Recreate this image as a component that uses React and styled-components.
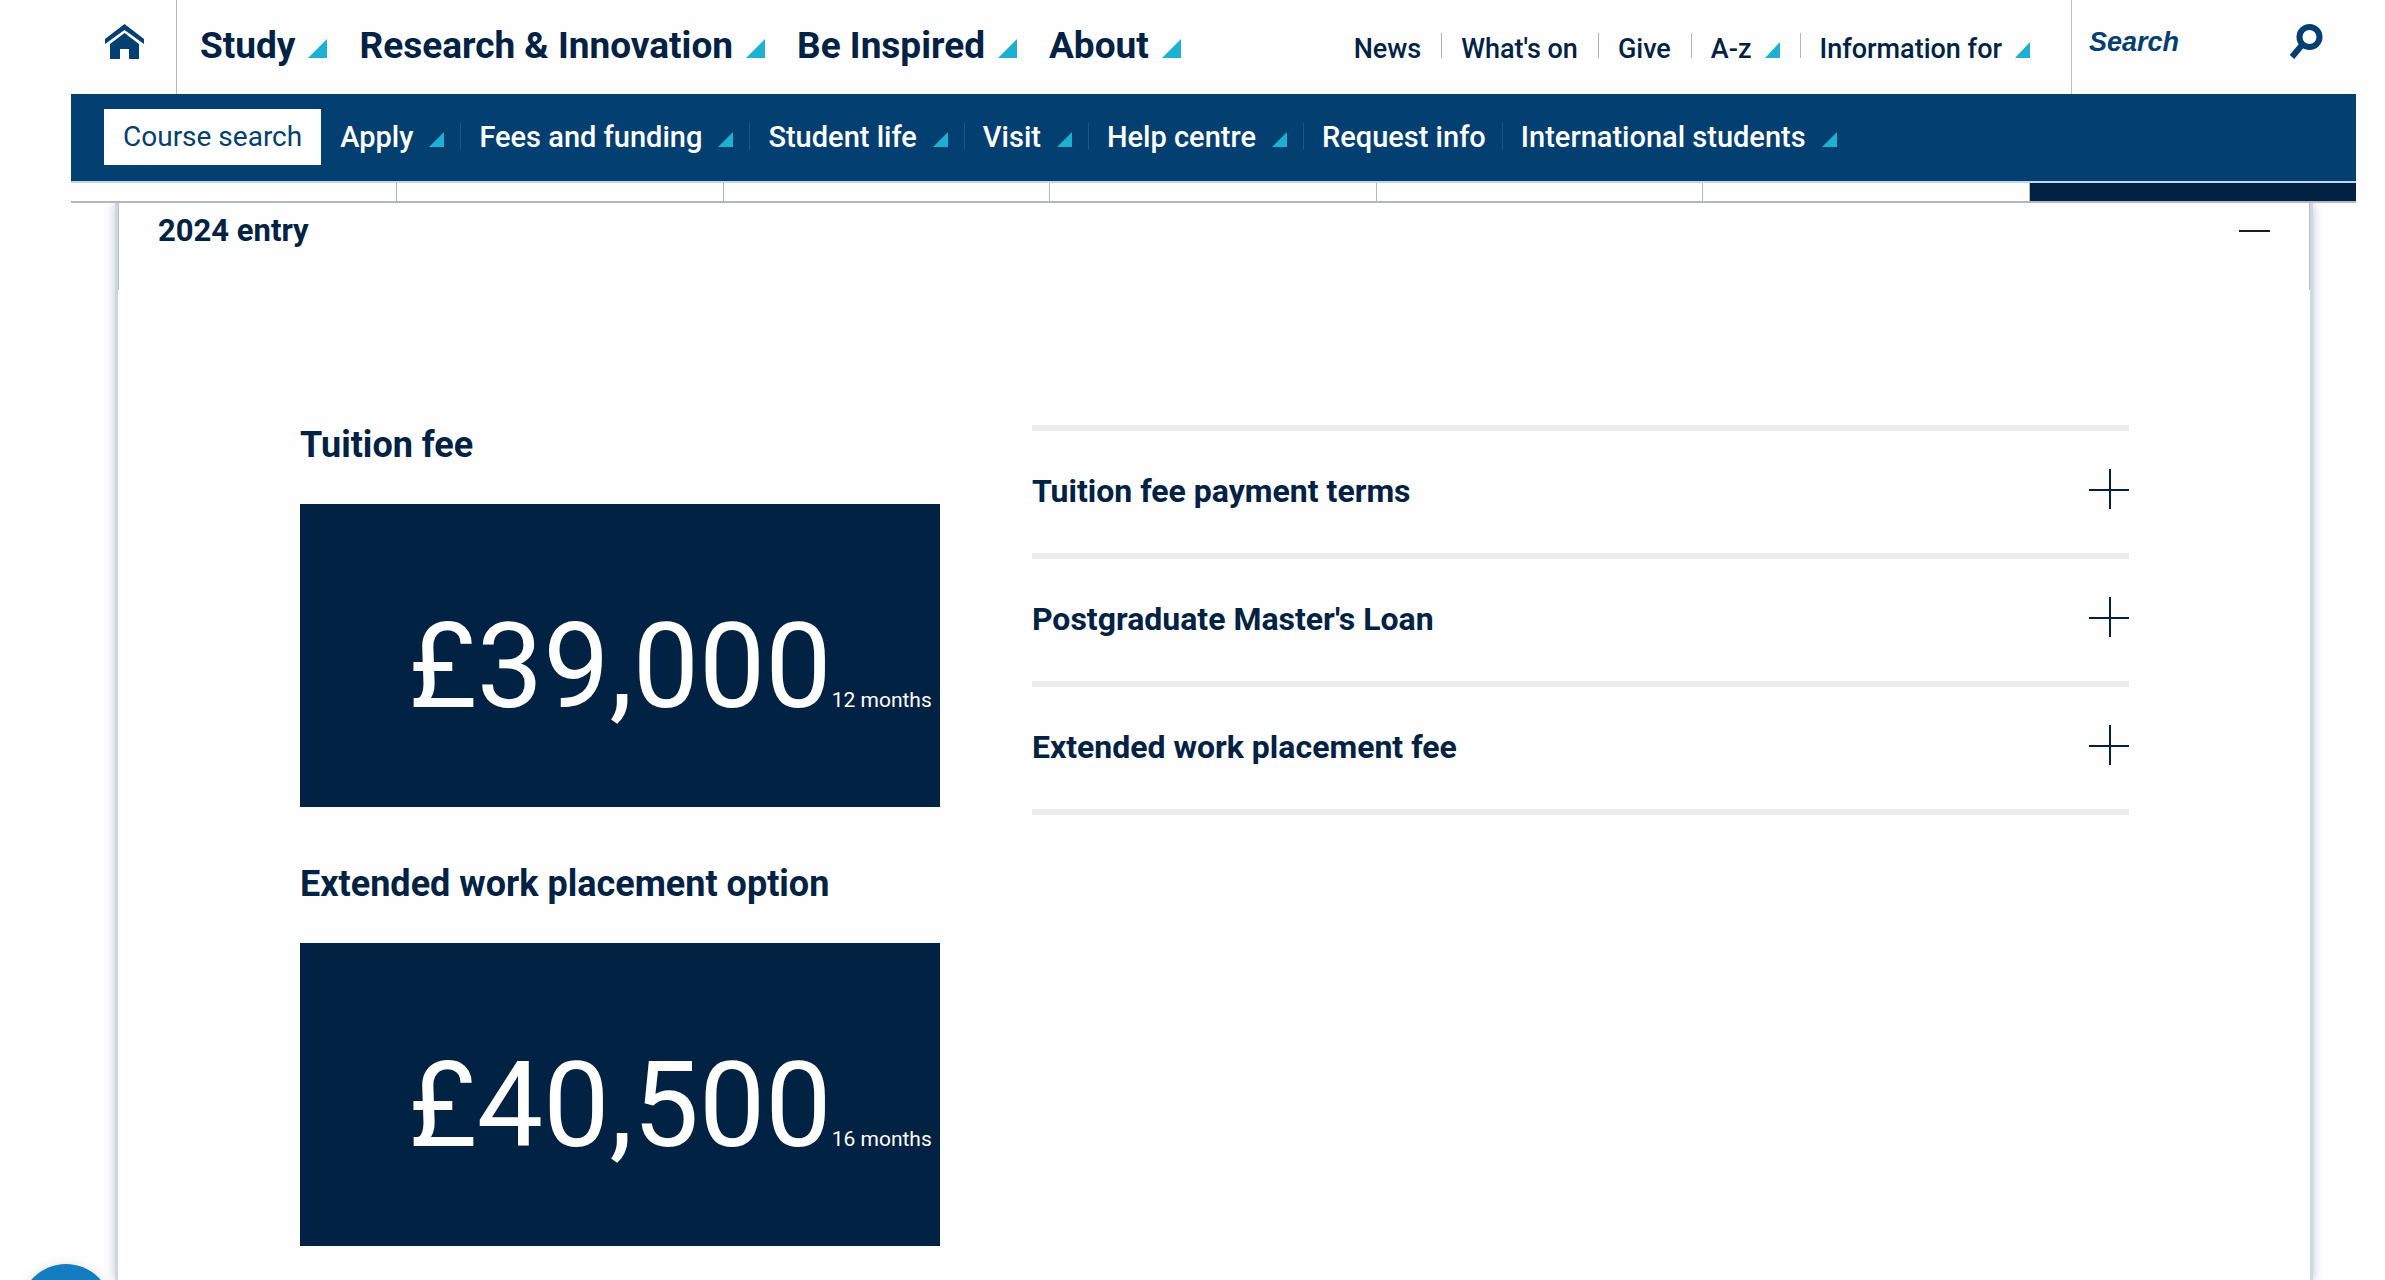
import React from "react";
import styled, { createGlobalStyle } from "styled-components";

const navy = "#022244";
const blue = "#033f70";
const cyan = "#1cb0d3";

const GlobalStyle = createGlobalStyle`
  *, *::before, *::after { box-sizing: border-box; }
  body {
    margin: 0;
    background: #fefefe;
    color: ${navy};
    font-family: Roboto, "Noto Sans", sans-serif;
  }
  ul, h2, p { margin: 0; padding: 0; }
  ul { list-style: none; }
  a { color: inherit; text-decoration: none; }
  button, input { font: inherit; color: inherit; border: 0; background: none; padding: 0; border-radius: 0; }
  button { cursor: pointer; text-align: left; }
`;

const Page = styled.div`
  display: flex;
  flex-direction: column;
  min-height: 100vh;
  padding: 0 29px 0 71px;
`;

const Header = styled.header`
  position: relative;
  z-index: 1;
  background: #fefefe;
`;

const TopBar = styled.div`
  display: flex;
  height: 94px;
`;

const HomeLink = styled.a`
  display: flex;
  align-items: center;
  justify-content: flex-end;
  width: 106px;
  padding: 0 32px 12px 0;
  border-right: 1px solid #b3b7bc;
`;

const MainNav = styled.nav`
  flex: 1;
  display: flex;
  align-items: baseline;
  justify-content: space-between;
  padding: 24px 41px 0 23px;
`;

const PrimaryList = styled.ul`
  display: flex;
  gap: 32px;
  font-size: 37px;
  font-weight: 700;
  line-height: 44px;
`;

const UtilityList = styled.ul`
  display: flex;
  font-size: 27px;
  font-weight: 500;
  line-height: 32px;

  li {
    display: flex;
    align-items: baseline;
  }
  li + li::before {
    content: "";
    width: 1px;
    height: 25px;
    margin: 0 19px 0 20px;
    background: #b3b7bc;
  }
`;

const NavLink = styled.a`
  display: flex;
  align-items: baseline;
  gap: ${(p) => p.$gap}px;
  white-space: nowrap;
`;

const Triangle = styled.svg`
  flex: none;
  fill: ${cyan};
`;

const SearchForm = styled.form`
  display: flex;
  align-items: center;
  width: 285px;
  padding: 0 33px 11px 17px;
  border-left: 1px solid #b9bec7;
`;

const SearchInput = styled.input`
  flex: 1;
  min-width: 0;
  font: italic bold 27px/32px "Liberation Sans", sans-serif;
  color: ${blue};
  outline: none;

  &::placeholder {
    color: ${blue};
    opacity: 1;
  }
`;

const SearchButton = styled.button`
  display: flex;
`;

const SubNav = styled.nav`
  display: flex;
  align-items: center;
  height: 87px;
  padding: 0 33px 2px;
  background: ${blue};
`;

const CourseSearch = styled.a`
  padding: 0 19px;
  margin-right: 19px;
  background: #fff;
  color: ${blue};
  font-size: 28px;
  line-height: 56px;
  white-space: nowrap;
`;

const SubList = styled.ul`
  display: flex;
  color: #fff;
  font-size: 29px;
  font-weight: 500;
  line-height: 56px;

  li {
    display: flex;
    align-items: center;
  }
  li + li::before {
    content: "";
    width: 1px;
    height: 27px;
    margin: 0 18px 0 16px;
    background: #1c5488;
  }
`;

const TabStrip = styled.div`
  display: grid;
  grid-template-columns: repeat(7, 1fr);
  height: 22px;
  border-top: 2px solid #bfd8e8;
  border-bottom: 2px solid #b4b8be;
`;

const Tab = styled.div`
  border-right: ${(p) => (p.$dark ? 0 : 1)}px solid #b4b8be;
  background: ${(p) => (p.$dark ? navy : "transparent")};
`;

const Panel = styled.main`
  flex: 1;
  margin: 0 43px 0 44px;
  border: 3px solid #cfd6e0;
  border-width: 0 3px;
  box-shadow: 0 0 10px #bac6d8;
`;

const EntryToggle = styled.button`
  display: flex;
  align-items: center;
  justify-content: space-between;
  width: 100%;
  padding: 10px 39px 41px;
  border: 1px solid #b9c0cc;
  border-width: 0 1px;
  font-size: 31px;
  font-weight: 700;
  line-height: 36px;
`;

const Content = styled.div`
  display: grid;
  grid-template-columns: 7fr 12fr;
  gap: 92px;
  padding: 133px 181px 30px 182px;
`;

const Fees = styled.div`
  display: flex;
  flex-direction: column;
  gap: 55px;
`;

const FeeTitle = styled.h2`
  margin-bottom: 37px;
  font-size: 36px;
  font-weight: 700;
  line-height: 44px;
`;

const FeeCard = styled.p`
  display: grid;
  grid-template-columns: 1fr auto 1fr;
  align-items: baseline;
  align-content: center;
  height: 303px;
  padding-top: 22px;
  background: ${navy};
  color: #fff;
`;

const Price = styled.span`
  grid-column: 2;
  font-size: 118px;
  line-height: 120px;
`;

const Duration = styled.span`
  font-size: 21px;
  line-height: 24px;
  white-space: nowrap;
`;

const Accordion = styled.div`
  margin-top: 2px;
  border-bottom: 6px solid #ececee;
  align-self: start;
`;

const AccordionItem = styled.button`
  display: flex;
  align-items: center;
  justify-content: space-between;
  width: 100%;
  height: 128px;
  padding-bottom: 2px;
  border-top: 6px solid #ececee;
  font-size: 32px;
  font-weight: 700;

  svg {
    margin-bottom: 4px;
  }
`;

const ChatButton = styled.button`
  position: fixed;
  left: 20px;
  bottom: -76px;
  z-index: 2;
  width: 92px;
  height: 92px;
  border-radius: 50%;
  background: #147cc1;
  box-shadow: 0 2px 12px rgba(0, 0, 0, 0.16);
`;

function Corner({ width, height }) {
  return (
    <Triangle width={width} height={height} viewBox="0 0 10 10" preserveAspectRatio="none" aria-hidden="true">
      <path d="M10 0V10H0Z" />
    </Triangle>
  );
}

const primary = ["Study", "Research & Innovation", "Be Inspired", "About"];
const utility = [
  { label: "News" },
  { label: "What's on" },
  { label: "Give" },
  { label: "A-z", menu: true },
  { label: "Information for", menu: true },
];
const study = [
  { label: "Apply", menu: true },
  { label: "Fees and funding", menu: true },
  { label: "Student life", menu: true },
  { label: "Visit", menu: true },
  { label: "Help centre", menu: true },
  { label: "Request info" },
  { label: "International students", menu: true },
];
const fees = [
  { title: "Tuition fee", price: "£39,000", duration: "12 months" },
  { title: "Extended work placement option", price: "£40,500", duration: "16 months" },
];
const details = ["Tuition fee payment terms", "Postgraduate Master's Loan", "Extended work placement fee"];

export default function App() {
  return (
    <>
      <GlobalStyle />
      <Page>
        <Header>
          <TopBar>
            <HomeLink href="#" aria-label="Home">
              <svg width="39" height="35" viewBox="0 0 39 35" fill={blue}>
                <path d="M19.500 0L39 15V20L19.500 6L0 20V15Z" />
                <path d="M19.500 9L34 20V35H24V25H15V35H5V20Z" />
              </svg>
            </HomeLink>
            <MainNav aria-label="Main">
              <PrimaryList>
                {primary.map((label) => (
                  <li key={label}>
                    <NavLink href="#" $gap={13}>
                      {label}
                      <Corner width="19" height="19" />
                    </NavLink>
                  </li>
                ))}
              </PrimaryList>
              <UtilityList>
                {utility.map(({ label, menu }) => (
                  <li key={label}>
                    <NavLink href="#" $gap={13}>
                      {label}
                      {menu && <Corner width="15" height="16" />}
                    </NavLink>
                  </li>
                ))}
              </UtilityList>
            </MainNav>
            <SearchForm role="search">
              <SearchInput type="text" placeholder="Search" aria-label="Search" />
              <SearchButton type="button" aria-label="Submit search">
                <svg width="34" height="36" viewBox="0 0 34 36" fill="none" stroke={blue}>
                  <circle cx="20.500" cy="13" r="10" strokeWidth="6" />
                  <path d="M13 21L3 33" strokeWidth="6" />
                </svg>
              </SearchButton>
            </SearchForm>
          </TopBar>
          <SubNav aria-label="Study">
            <CourseSearch href="#">Course search</CourseSearch>
            <SubList>
              {study.map(({ label, menu }) => (
                <li key={label}>
                  <NavLink href="#" $gap={16}>
                    {label}
                    {menu && <Corner width="15" height="15" />}
                  </NavLink>
                </li>
              ))}
            </SubList>
          </SubNav>
          <TabStrip>
            <Tab />
            <Tab />
            <Tab />
            <Tab />
            <Tab />
            <Tab />
            <Tab $dark />
          </TabStrip>
        </Header>
        <Panel>
          <EntryToggle type="button" aria-expanded="true">
            2024 entry
            <svg width="31" height="2" aria-hidden="true">
              <path d="M0 1H31" stroke="#111c2c" strokeWidth="2" />
            </svg>
          </EntryToggle>
          <Content>
            <Fees>
              {fees.map(({ title, price, duration }) => (
                <section key={title}>
                  <FeeTitle>{title}</FeeTitle>
                  <FeeCard>
                    <Price>{price}</Price>
                    <Duration>{duration}</Duration>
                  </FeeCard>
                </section>
              ))}
            </Fees>
            <Accordion>
              {details.map((label) => (
                <AccordionItem type="button" aria-expanded="false" key={label}>
                  {label}
                  <svg width="40" height="40" fill="none" stroke={navy} strokeWidth="2" aria-hidden="true">
                    <path d="M0 21H40M21 0V40" />
                  </svg>
                </AccordionItem>
              ))}
            </Accordion>
          </Content>
        </Panel>
      </Page>
      <ChatButton type="button" aria-label="Open chat" />
    </>
  );
}
